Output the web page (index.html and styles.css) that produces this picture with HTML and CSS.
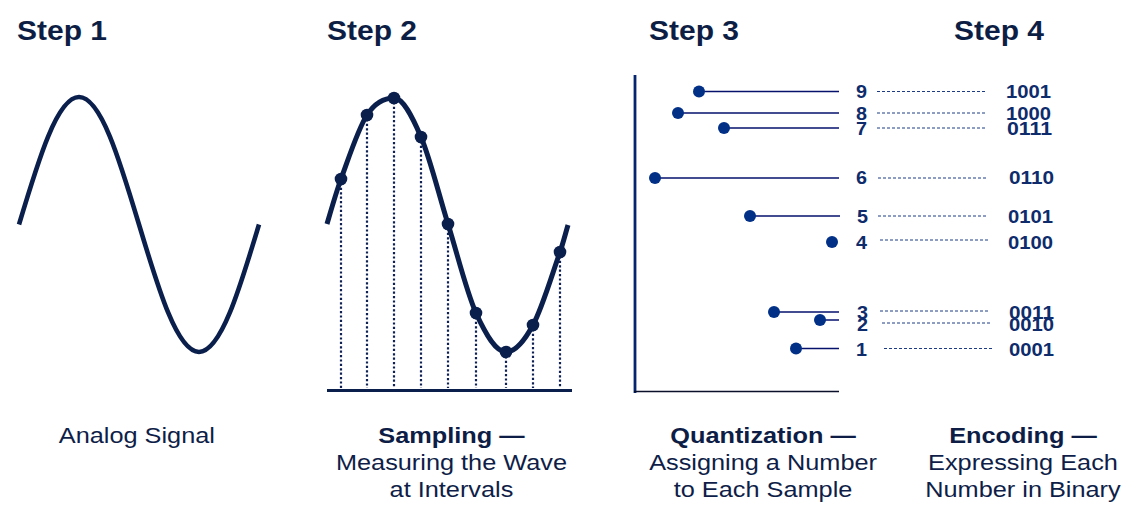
FILE: index.html
```html
<!DOCTYPE html>
<html lang="en">
<head>
<meta charset="utf-8">
<title>Analog to Digital Conversion</title>
<link rel="stylesheet" href="styles.css">
</head>
<body>
<div class="diagram">
  <h2 class="step c1">Step 1</h2>
  <h2 class="step c2">Step 2</h2>
  <h2 class="step c3">Step 3</h2>
  <h2 class="step c4">Step 4</h2>

  <svg class="chart c1" width="240" height="340" viewBox="17 60 240 340">
    <path class="wave" d="M19,224.5 C38.57,159.2 57.29,97 79,97 C100.71,97 119.43,159.2 139,224.5 C158.57,289.8 177.29,352 199,352 C220.71,352 239.43,289.8 259,224.5"/>
  </svg>

  <svg class="chart c2" width="248" height="340" viewBox="327 60 248 340">
    <g class="drops">
      <line x1="341" y1="179" x2="341" y2="388"/>
      <line x1="367" y1="115" x2="367" y2="388"/>
      <line x1="394" y1="98" x2="394" y2="388"/>
      <line x1="421" y1="137" x2="421" y2="388"/>
      <line x1="448" y1="224" x2="448" y2="388"/>
      <line x1="476" y1="313" x2="476" y2="388"/>
      <line x1="506" y1="352" x2="506" y2="388"/>
      <line x1="533" y1="325" x2="533" y2="388"/>
      <line x1="560" y1="252" x2="560" y2="388"/>
    </g>
    <line class="base" x1="327" y1="390.5" x2="572" y2="390.5"/>
    <path class="wave thick" d="M327,224 C331.67,208.1 336.33,191.7 341,179 C349.67,155.3 358.33,128.3 367,115 C376,101.2 385,98 394,98 C403,98 412,116 421,137 C430,158 439,195.2 448,224 C457.33,253.9 466.67,292.5 476,313 C486,335 496,352 506,352 C515,352 524,341.7 533,325 C542,308.4 551,277.7 560,252 C562.67,244.4 565.33,234.1 568,225"/>
    <g class="samples">
      <circle cx="341" cy="179" r="6.3"/>
      <circle cx="367" cy="115" r="6.3"/>
      <circle cx="394" cy="98" r="6.3"/>
      <circle cx="421" cy="137" r="6.3"/>
      <circle cx="448" cy="224" r="6.3"/>
      <circle cx="476" cy="313" r="6.3"/>
      <circle cx="506" cy="352" r="6.3"/>
      <circle cx="533" cy="325" r="6.3"/>
      <circle cx="560" cy="252" r="6.3"/>
    </g>
  </svg>

  <svg class="chart c34" width="517" height="340" viewBox="575 60 517 340">
    <line class="y-axis" x1="635" y1="75" x2="635" y2="393"/>
    <line class="x-axis" x1="634" y1="391.5" x2="839" y2="391.5"/>
    <g class="stems">
      <line x1="699" y1="91.5" x2="839" y2="91.5"/>
      <line x1="678" y1="113" x2="839" y2="113"/>
      <line x1="724" y1="128" x2="839" y2="128"/>
      <line x1="655" y1="178" x2="839" y2="178"/>
      <line x1="750" y1="216" x2="840" y2="216"/>
      <line x1="774" y1="312" x2="839" y2="312"/>
      <line x1="820" y1="320" x2="839" y2="320"/>
      <line x1="796" y1="348.5" x2="839" y2="348.5"/>
    </g>
    <g class="points">
      <circle cx="699" cy="91.5" r="6"/>
      <circle cx="678" cy="113" r="6"/>
      <circle cx="724" cy="128" r="6"/>
      <circle cx="655" cy="178" r="6"/>
      <circle cx="750" cy="216" r="6"/>
      <circle cx="832" cy="242" r="6"/>
      <circle cx="774" cy="312" r="6"/>
      <circle cx="820" cy="320" r="6"/>
      <circle cx="796" cy="348.5" r="6"/>
    </g>
    <g class="leaders">
      <line x1="877" y1="91.5" x2="986" y2="91.5"/>
      <line x1="877" y1="113" x2="986" y2="113"/>
      <line x1="877" y1="128" x2="986" y2="128"/>
      <line x1="878" y1="178" x2="987" y2="178"/>
      <line x1="878" y1="216" x2="987" y2="216"/>
      <line x1="880" y1="240" x2="988" y2="240"/>
      <line x1="880" y1="311" x2="988" y2="311"/>
      <line x1="882" y1="323" x2="990" y2="323"/>
      <line x1="884" y1="348.5" x2="993" y2="348.5"/>
    </g>
    <g class="levels">
      <text x="856" y="98" textLength="11" lengthAdjust="spacingAndGlyphs">9</text>
      <text x="856" y="119.5" textLength="11" lengthAdjust="spacingAndGlyphs">8</text>
      <text x="856" y="134.5" textLength="11" lengthAdjust="spacingAndGlyphs">7</text>
      <text x="856" y="184" textLength="11" lengthAdjust="spacingAndGlyphs">6</text>
      <text x="857" y="222.5" textLength="11" lengthAdjust="spacingAndGlyphs">5</text>
      <text x="856" y="248.5" textLength="11" lengthAdjust="spacingAndGlyphs">4</text>
      <text x="857" y="318.5" textLength="11" lengthAdjust="spacingAndGlyphs">3</text>
      <text x="857" y="330.5" textLength="11" lengthAdjust="spacingAndGlyphs">2</text>
      <text x="856" y="356" textLength="11" lengthAdjust="spacingAndGlyphs">1</text>
    </g>
    <g class="levels">
      <text x="1006" y="98" textLength="45" lengthAdjust="spacingAndGlyphs">1001</text>
      <text x="1006" y="119.5" textLength="45" lengthAdjust="spacingAndGlyphs">1000</text>
      <text x="1007" y="134.5" textLength="45" lengthAdjust="spacingAndGlyphs">0111</text>
      <text x="1009" y="184" textLength="45" lengthAdjust="spacingAndGlyphs">0110</text>
      <text x="1008" y="222.5" textLength="45" lengthAdjust="spacingAndGlyphs">0101</text>
      <text x="1008" y="248.5" textLength="45" lengthAdjust="spacingAndGlyphs">0100</text>
      <text x="1009" y="318.5" textLength="45" lengthAdjust="spacingAndGlyphs">0011</text>
      <text x="1009" y="330.5" textLength="45" lengthAdjust="spacingAndGlyphs">0010</text>
      <text x="1009" y="356" textLength="45" lengthAdjust="spacingAndGlyphs">0001</text>
    </g>
  </svg>

  <div class="caption c1"><p>Analog Signal</p></div>
  <div class="caption c2"><p><b>Sampling —</b><br>Measuring the Wave<br>at Intervals</p></div>
  <div class="caption c3"><p><b>Quantization —</b><br>Assigning a Number<br>to Each Sample</p></div>
  <div class="caption c4"><p><b>Encoding —</b><br>Expressing Each<br>Number in Binary</p></div>
</div>
</body>
</html>
```

FILE: styles.css
```css
html, body {
  margin: 0;
  background: #ffffff;
}

.diagram {
  display: grid;
  grid-template-columns: 17px 240px 70px 248px 74px 228px 77px 138px 1fr;
  grid-template-rows: 60px 340px auto;
  width: 1141px;
  height: 521px;
  overflow: hidden;
  font-family: "Liberation Sans", Arial, sans-serif;
  color: #0f1f46;
}

.c1 { grid-column: 2; }
.c2 { grid-column: 4; }
.c3 { grid-column: 6; }
.c4 { grid-column: 8; }
.c34 { grid-column: 5 / 9; }

.step {
  grid-row: 1;
  margin: 0;
  padding-top: 17px;
  font-size: 27px;
  line-height: 28px;
  font-weight: 700;
  color: #0d1e45;
  white-space: nowrap;
  transform: scaleX(1.11);
  transform-origin: left center;
}

.chart {
  grid-row: 2;
  display: block;
  overflow: visible;
}

.wave {
  fill: none;
  stroke: #0b1f4d;
  stroke-width: 4.6;
  stroke-linecap: butt;
}

.wave.thick {
  stroke-width: 5;
}

.drops line {
  stroke: #0e2152;
  stroke-width: 2.2;
  stroke-dasharray: 2.2 2.2;
}

.base {
  stroke: #0b1f4d;
  stroke-width: 3.2;
}

.samples circle {
  fill: #0b1f4d;
}

.y-axis {
  stroke: #06256f;
  stroke-width: 2.8;
}

.x-axis {
  stroke: #0a0f2a;
  stroke-width: 1.6;
}

.stems line {
  stroke: #05116b;
  stroke-width: 1.5;
}

.points circle {
  fill: #023087;
}

.leaders line {
  stroke: #1d3a84;
  stroke-width: 1;
  stroke-dasharray: 3 2;
}

.levels text {
  font-family: "Liberation Sans", Arial, sans-serif;
  font-weight: 700;
  font-size: 18px;
  fill: #0e2b6b;
}

.caption {
  grid-row: 3;
  display: flex;
  flex-direction: column;
  align-items: center;
  padding-top: 22px;
}

.caption p {
  margin: 0;
  white-space: nowrap;
  text-align: center;
  font-size: 22px;
  line-height: 27px;
  color: #0f1e48;
  transform: scaleX(1.15);
}

.caption b {
  font-weight: 700;
  color: #0d1d45;
}
```
